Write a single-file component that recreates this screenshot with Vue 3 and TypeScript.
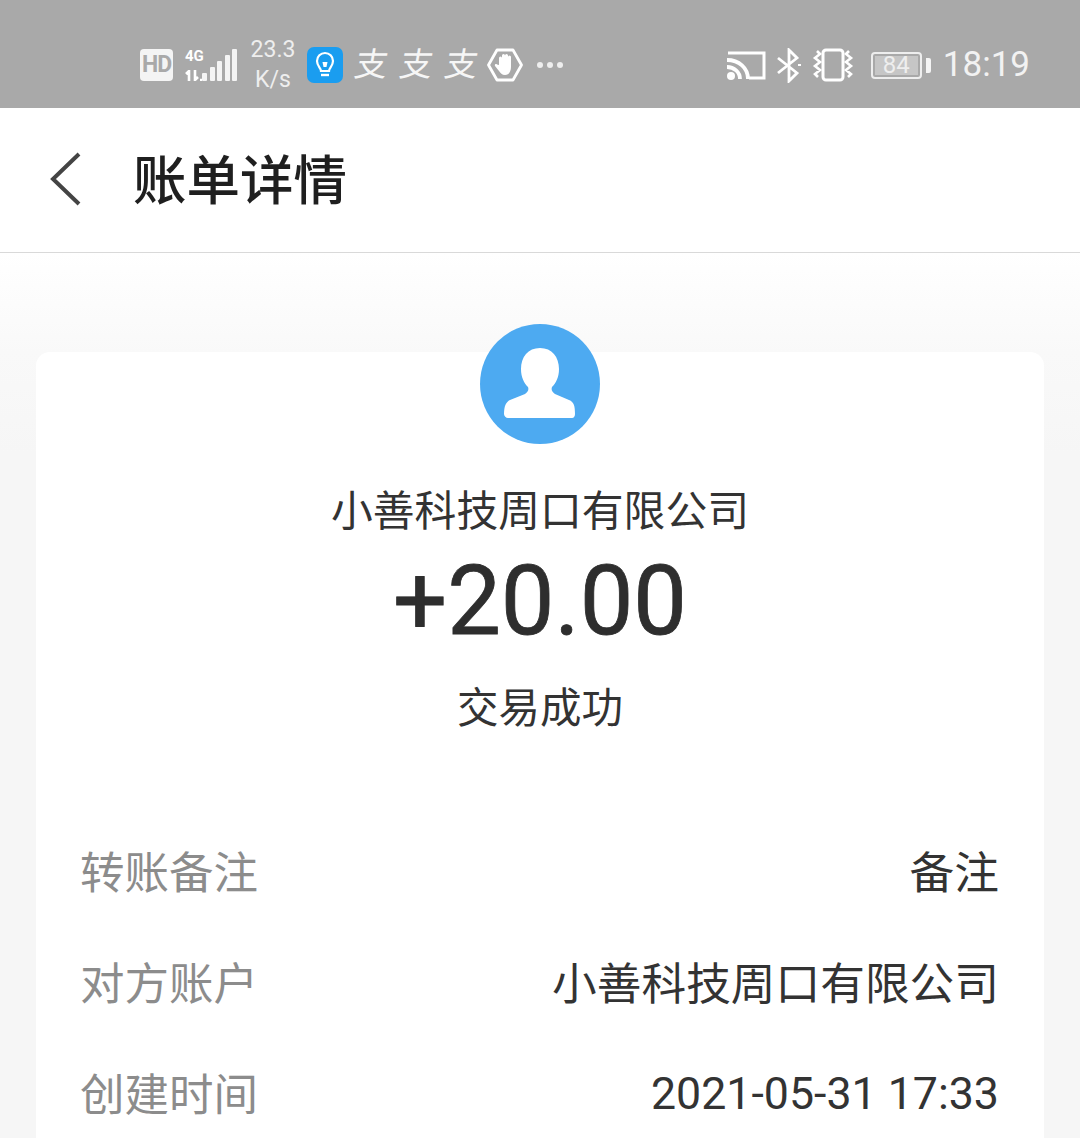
<template>
  <div class="page">
    <div class="status">
      <div class="status-left">
        <span class="hd">HD</span>
        <div class="net">
          <div class="net-labels">
            <span>4G</span>
            <svg width="17" height="11" viewBox="0 0 17 11">
              <path d="M4 11V1L1 4M10 0v10l3-3M15 10h2" fill="none" stroke="#fff" stroke-width="2.600" />
            </svg>
          </div>
          <div class="bars">
            <i v-for="h in signalBars" :key="h" :style="{ height: h + 'px' }"></i>
          </div>
        </div>
        <div class="speed">
          <span>23.3</span>
          <span>K/s</span>
        </div>
        <svg class="bulb" width="36" height="36" viewBox="0 0 36 36">
          <rect width="36" height="36" rx="7" fill="#1a9df0" />
          <path d="M14 24c0-3-4-5-4-10a8 8 0 0 1 16 0c0 5-4 7-4 10z" fill="none" stroke="#fff" stroke-width="2.200" />
          <path d="M14 28h8" stroke="#fff" stroke-width="2.400" />
          <path d="M15.500 15h5l-1 5h-3z" fill="#fff" />
        </svg>
        <span class="pay">支</span>
        <span class="pay">支</span>
        <span class="pay">支</span>
        <svg class="hand" width="36" height="34" viewBox="0 0 36 34">
          <path d="M10 2h16l8.500 15L26 32H10L1.500 17z" fill="none" stroke="#fff" stroke-width="2.800" stroke-linejoin="round" />
          <path d="M12 17V10a1.500 1.500 0 0 1 3 0V7.500a1.500 1.500 0 0 1 3 0 1.500 1.500 0 0 1 3 0V9a1.500 1.500 0 0 1 3 0v10c0 5-2.500 8-6 8-3 0-4.500-2-6-4l-4-5c-.8-1.500 1-2.500 2-1.500z" fill="#fff" />
        </svg>
        <span class="more"><i></i><i></i><i></i></span>
      </div>
      <div class="status-right">
        <svg width="39" height="30" viewBox="0 0 39 30">
          <path d="M1 3h36v25H22" fill="none" stroke="#fff" stroke-width="3" />
          <path d="M0 10c12 0 21 8 21 19M0 17c7 0 13 5 13 12" fill="none" stroke="#fff" stroke-width="3.800" />
          <circle cx="4" cy="26" r="4" fill="#fff" />
        </svg>
        <svg class="bt" width="25" height="35" viewBox="0 0 25 35">
          <path d="M2 10l19 15-8 8V2l8 8L2 25" fill="none" stroke="#fff" stroke-width="2.800" />
          <path d="M22 17h3" stroke="#fff" stroke-width="2" />
        </svg>
        <svg class="vibrate" width="42" height="34" viewBox="0 0 42 34">
          <rect x="11" y="2" width="20" height="30" rx="3" fill="none" stroke="#fff" stroke-width="3" />
          <path d="M5 3l3 3-5 4 5 4-5 4 5 4-5 4 3 3M37 3l-3 3 5 4-5 4 5 4-5 4 5 4-3 3" fill="none" stroke="#fff" stroke-width="2.600" />
        </svg>
        <div class="battery">
          <div class="battery-body"><span>84</span></div>
          <i></i>
        </div>
        <span class="clock">18:19</span>
      </div>
    </div>

    <header class="title-bar">
      <svg width="32" height="54" viewBox="0 0 32 54">
        <path d="M30 2L4 27l26 25" fill="none" stroke="#444" stroke-width="4" />
      </svg>
      <h1>账单详情</h1>
    </header>

    <main class="content">
      <section class="card">
        <svg class="avatar" width="120" height="120" viewBox="0 0 120 120">
          <circle cx="60" cy="60" r="60" fill="#4daaf1" />
          <path d="M60 24c12 0 19 9 19 21 0 8-3 14-7 18-1 3 0 5 3 7l14 6c5 2 6 6 6 14 0 2-1 4-3 4H28c-2 0-4-2-4-4 0-8 2-12 6-14l15-6c3-2 4-4 3-7-4-4-7-10-7-18 0-12 7-21 19-21z" fill="#fff" />
        </svg>
        <div class="name">{{ bill.name }}</div>
        <div class="amount">{{ bill.amount }}</div>
        <div class="state">{{ bill.state }}</div>
        <dl class="rows">
          <div v-for="row in bill.rows" :key="row.label" class="row">
            <dt>{{ row.label }}</dt>
            <dd>{{ row.value }}</dd>
          </div>
        </dl>
      </section>
    </main>
  </div>
</template>

<script setup lang="ts">
const signalBars: number[] = [8, 14, 20, 26, 32];

const bill = {
  name: '小善科技周口有限公司',
  amount: '+20.00',
  state: '交易成功',
  rows: [
    { label: '转账备注', value: '备注' },
    { label: '对方账户', value: '小善科技周口有限公司' },
    { label: '创建时间', value: '2021-05-31 17:33' },
  ],
};
</script>

<style>
html,
body {
  margin: 0;
  background: #fff;
}
</style>

<style scoped>
.page {
  width: 1080px;
  height: 1138px;
  overflow: hidden;
  font-family: Roboto, "Noto Sans CJK SC", sans-serif;
  color: #333;
  background: #f8f8f8;
}

.status {
  height: 108px;
  box-sizing: border-box;
  padding: 22px 50px 0 140px;
  background: #a9a9a9;
  display: flex;
  align-items: center;
  justify-content: space-between;
  color: #fff;
}

.status-left,
.status-right {
  display: flex;
  align-items: center;
}

.hd {
  width: 33px;
  height: 32px;
  border-radius: 4px;
  background: #f4f4f4;
  color: #a9a9a9;
  font-size: 23px;
  font-weight: 700;
  line-height: 32px;
  text-align: center;
  letter-spacing: -1px;
}

.net {
  display: flex;
  align-items: flex-end;
  margin-left: 12px;
}

.net-labels {
  width: 17px;
  display: flex;
  flex-direction: column;
  gap: 7px;
  font-size: 15px;
  font-weight: 700;
  line-height: 14px;
  white-space: nowrap;
}

.bars {
  width: 35px;
  display: flex;
  align-items: flex-end;
  justify-content: flex-end;
  gap: 2.500px;
}

.bars i {
  width: 5px;
  background: #f4f4f4;
  border-radius: 1px;
}

.speed {
  display: flex;
  flex-direction: column;
  align-items: center;
  width: 48px;
  margin-left: 12px;
  font-size: 23px;
  line-height: 30px;
  color: #eee;
}

.bulb {
  margin-left: 10px;
}

.pay {
  width: 33px;
  margin-left: 12px;
  font-size: 33px;
  line-height: 38px;
  text-align: center;
  color: #f6f6f6;
  transform: skewX(-10deg);
}

.hand {
  margin-left: 9px;
}

.more {
  display: flex;
  gap: 4px;
  margin-left: 14px;
}

.more i {
  width: 6px;
  height: 6px;
  border-radius: 50%;
  background: #eee;
}

.bt {
  margin-left: 10px;
}

.vibrate {
  margin-left: 11px;
}

.battery {
  display: flex;
  align-items: center;
  margin-left: 17px;
  gap: 4px;
}

.battery-body {
  width: 51px;
  height: 27px;
  box-sizing: border-box;
  border: 2px solid #eee;
  border-radius: 4px;
  padding: 2px;
  display: flex;
}

.battery-body span {
  width: 43px;
  background: #c6c6c6;
  font-size: 24px;
  line-height: 19px;
  text-align: center;
  color: #eee;
}

.battery i {
  width: 5px;
  height: 15px;
  background: #f4f4f4;
  border-radius: 0 2px 2px 0;
}

.clock {
  margin-left: 12px;
  font-size: 35px;
  line-height: 44px;
  color: #f2f2f2;
}

.title-bar {
  height: 145px;
  box-sizing: border-box;
  padding: 0 0 0 49px;
  display: flex;
  align-items: center;
  background: #fff;
  border-bottom: 1px solid #d9d9d9;
}

.title-bar svg {
  margin-bottom: 3px;
}

.title-bar h1 {
  margin: 0 0 8px 52px;
  font-size: 53.500px;
  font-weight: 500;
  color: #1f1f1f;
}

.content {
  height: 885px;
  padding: 99px 36px 0;
  background: linear-gradient(#fff, #f9f9f9 100px, #f6f6f6 200px);
}

.card {
  height: 900px;
  box-sizing: border-box;
  background: #fff;
  border-radius: 14px 14px 0 0;
  display: flex;
  flex-direction: column;
  align-items: center;
}

.avatar {
  margin-top: -28px;
}

.name {
  margin-top: 41px;
  font-size: 41.800px;
  line-height: 54px;
}

.amount {
  margin-top: 6px;
  font-size: 95.500px;
  line-height: 112px;
  color: #2e2e2e;
  -webkit-text-stroke: 0.8px #2e2e2e;
}

.state {
  margin-top: 25px;
  font-size: 41.500px;
  line-height: 54px;
}

.rows {
  align-self: stretch;
  margin: 78px 0 0;
  padding: 0 45px 0 44px;
}

.row {
  height: 111px;
  display: flex;
  align-items: center;
  justify-content: space-between;
}

.row:last-child dd {
  padding-top: 4px;
}

.row dt {
  font-size: 44.500px;
  color: #8c8c8c;
}

.row dd {
  margin: 0;
  font-size: 44.700px;
  color: #333;
}
</style>
